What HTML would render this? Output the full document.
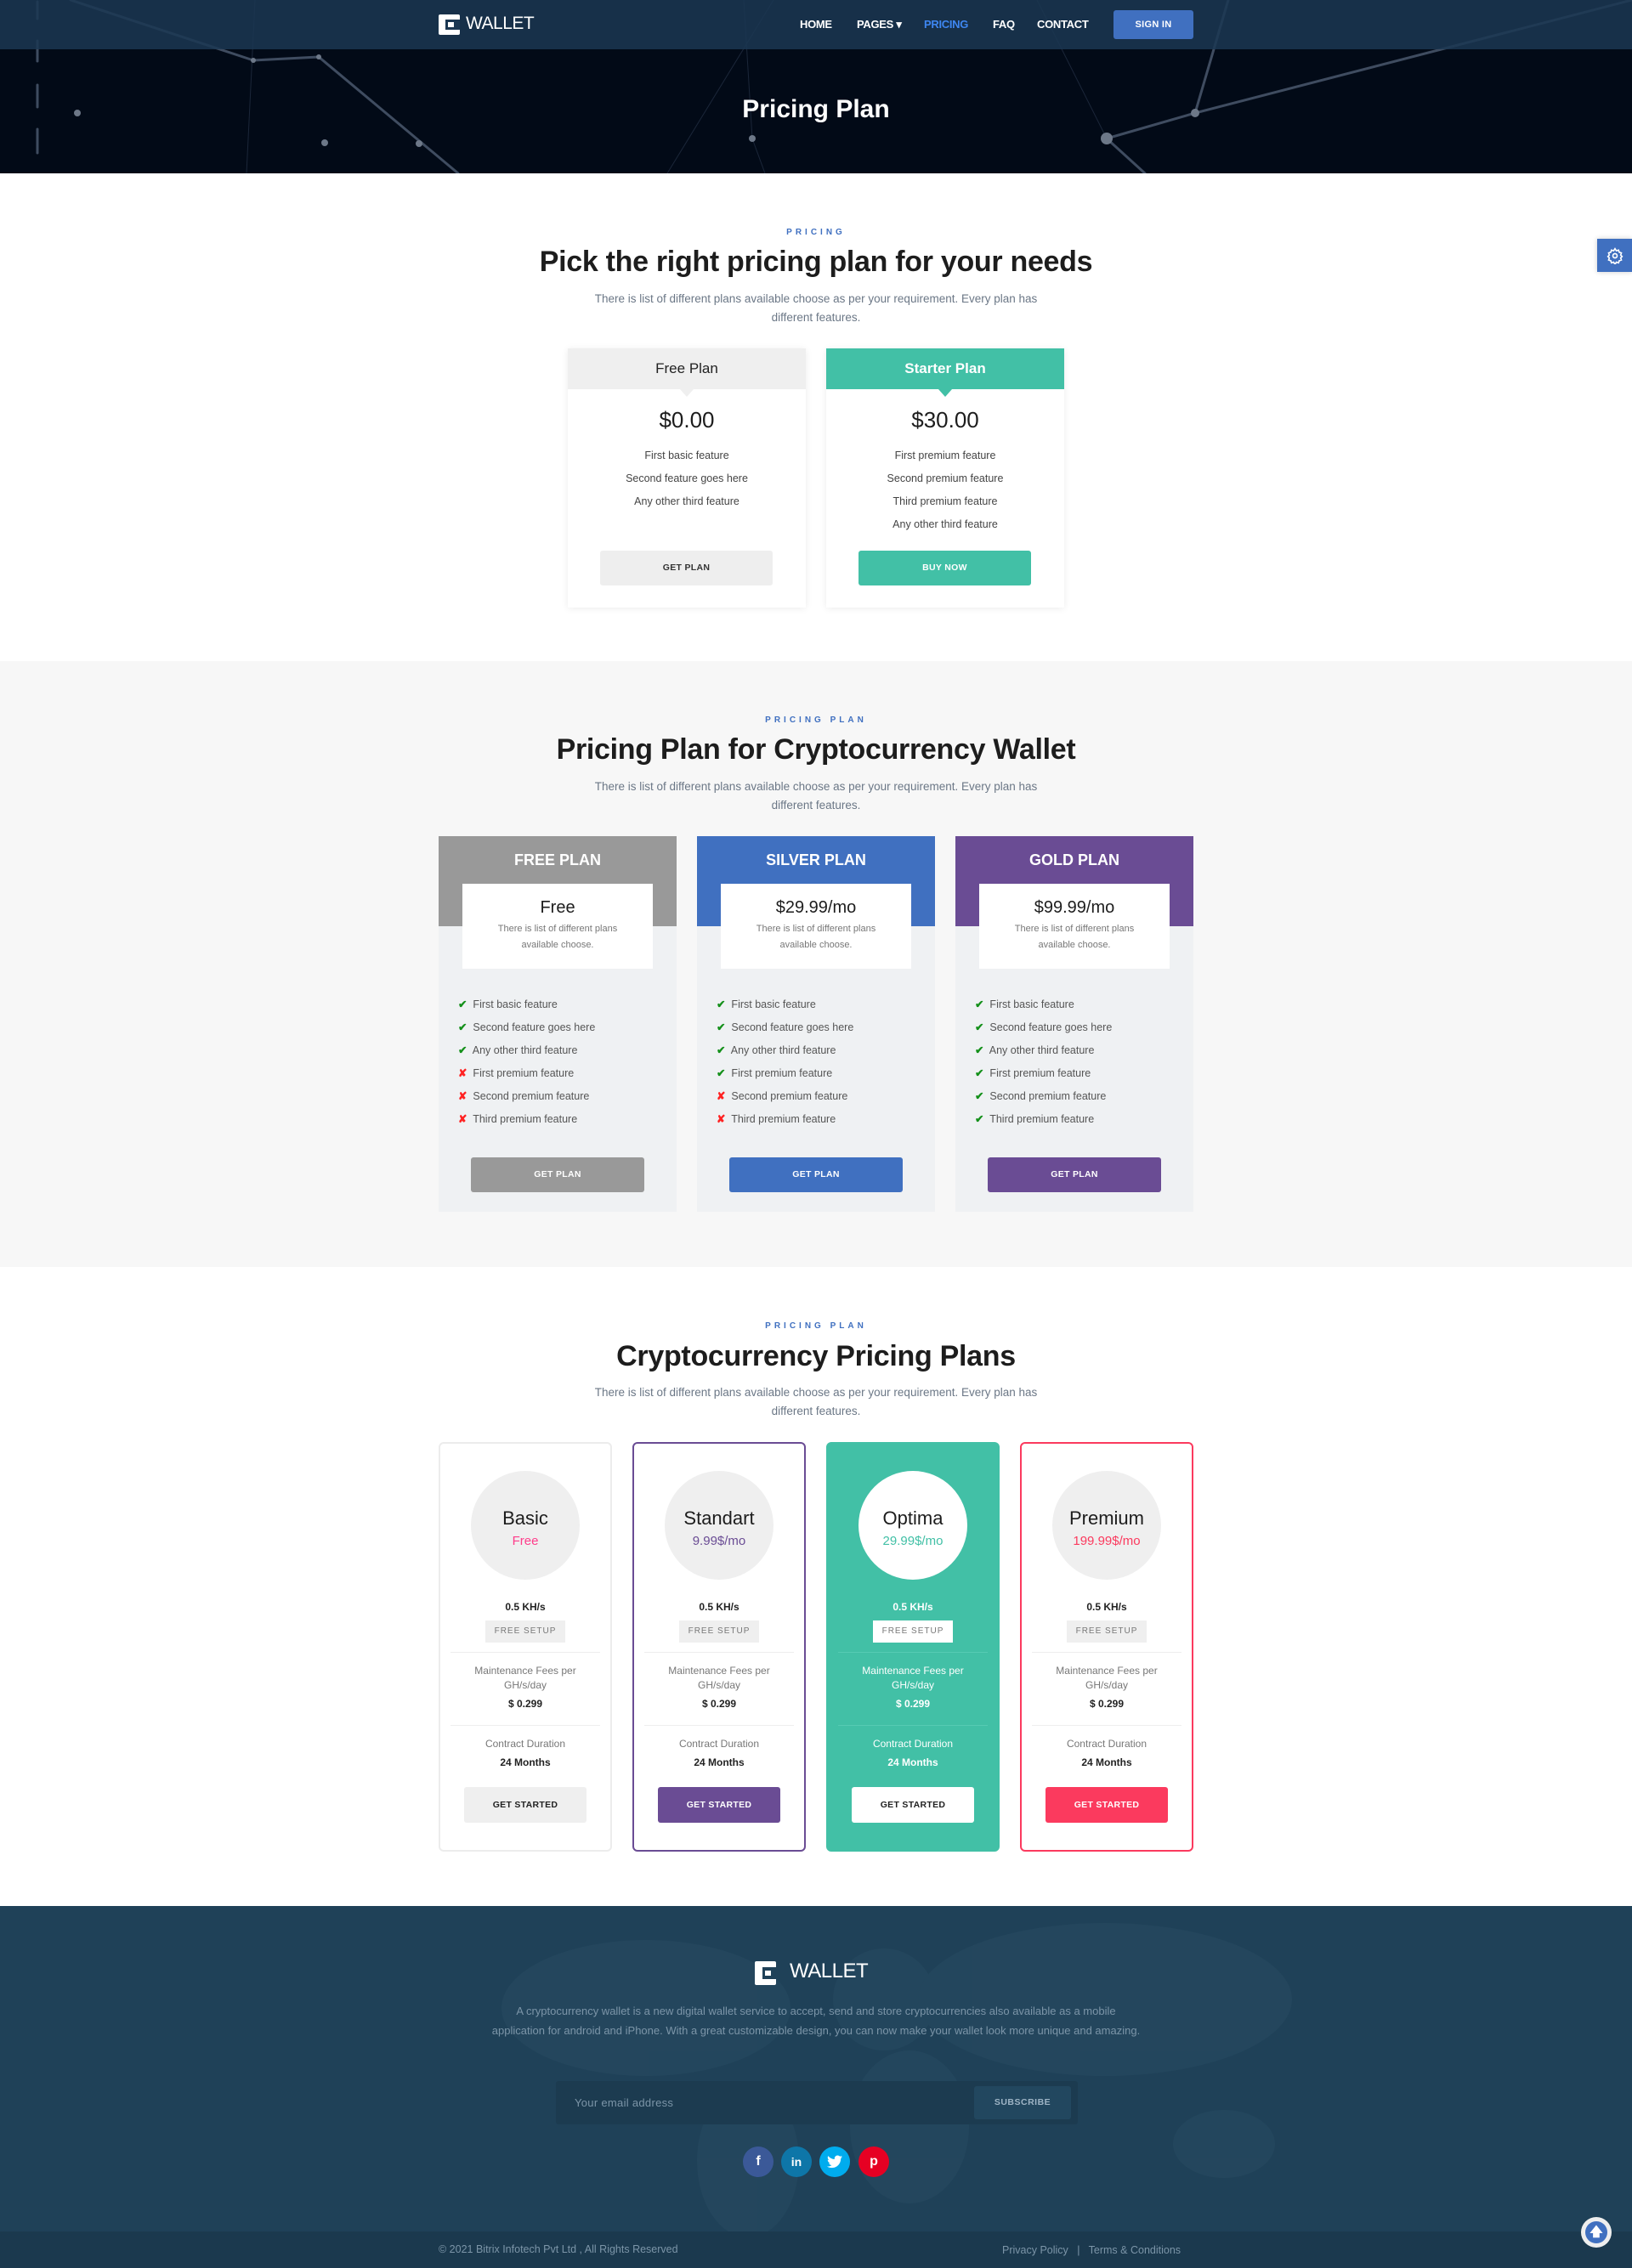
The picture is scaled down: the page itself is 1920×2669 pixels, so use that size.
<!DOCTYPE html>
<html><head><meta charset="utf-8">
<style>
*{margin:0;padding:0;box-sizing:border-box}
body{width:1920px;height:2669px;position:relative;font-family:"Liberation Sans",sans-serif;background:#fff;overflow:hidden;color:#222}
.a{position:absolute}
.c{text-align:center}
.lbl{font-size:10px;letter-spacing:4px;color:#4070c0;font-weight:bold}
.h2{font-size:34px;font-weight:bold;color:#1d1d1d;letter-spacing:-0.3px}
.desc{font-size:13.5px;color:#6b7786;line-height:22px}
.btn{position:absolute;border-radius:3px;font-size:10.5px;font-weight:bold;text-align:center;letter-spacing:.3px}
</style></head><body>

<!-- HERO -->
<div class="a" style="left:0;top:0;width:1920px;height:204px;background:#020a17"></div>
<svg class="a" style="left:0;top:0" width="1920" height="204">
 <g stroke="#2c3a50" stroke-width="1" opacity=".6">
  <line x1="875" y1="0" x2="885" y2="163"/><line x1="885" y1="163" x2="900" y2="204"/>
  <line x1="910" y1="0" x2="785" y2="204"/><line x1="1220" y1="0" x2="1302" y2="163"/>
  <line x1="290" y1="204" x2="300" y2="0"/>
 </g>
 <g stroke="#3f4c60" stroke-width="3" stroke-linecap="round">
  <line x1="83" y1="0" x2="298" y2="71"/><line x1="298" y1="71" x2="375" y2="67"/>
  <line x1="375" y1="67" x2="539" y2="204"/>
  <line x1="44" y1="2" x2="44" y2="22"/><line x1="44" y1="48" x2="44" y2="72"/>
  <line x1="44" y1="100" x2="44" y2="126"/><line x1="44" y1="152" x2="44" y2="180"/>
  <line x1="1302" y1="163" x2="1406" y2="133"/><line x1="1406" y1="133" x2="1920" y2="0"/>
  <line x1="1406" y1="133" x2="1445" y2="0"/><line x1="1302" y1="163" x2="1347" y2="204"/>
 </g>
 <g fill="#6d7888">
  <circle cx="493" cy="169" r="4"/><circle cx="382" cy="168" r="4"/><circle cx="91" cy="133" r="4"/>
  <circle cx="885" cy="163" r="4"/><circle cx="1302" cy="163" r="7"/><circle cx="1406" cy="133" r="5"/>
  <circle cx="298" cy="71" r="3"/><circle cx="375" cy="67" r="3"/>
 </g>
</svg>
<div class="a" style="left:0;top:0;width:1920px;height:58px;background:rgba(27,55,82,.85)"></div>
<div class="a" style="left:516px;top:17px;width:25px;height:24px;background:#fff;border-radius:2px"></div>
<div class="a" style="left:524px;top:23px;width:17px;height:12px;background:#1b3752"></div>
<div class="a" style="left:527px;top:26px;width:7px;height:6px;background:#fff"></div>
<div class="a" style="left:548px;top:16px;font-size:21px;color:#fff;letter-spacing:-.5px">WALLET</div>
<div class="a" style="top:21px;left:941px;font-size:13px;color:#fff;font-weight:bold;letter-spacing:-.3px">HOME</div>
<div class="a" style="top:21px;left:1008px;font-size:13px;color:#fff;font-weight:bold;letter-spacing:-.3px">PAGES ▾</div>
<div class="a" style="top:21px;left:1087px;font-size:13px;color:#3e86f0;font-weight:bold;letter-spacing:-.3px">PRICING</div>
<div class="a" style="top:21px;left:1168px;font-size:13px;color:#fff;font-weight:bold;letter-spacing:-.3px">FAQ</div>
<div class="a" style="top:21px;left:1220px;font-size:13px;color:#fff;font-weight:bold;letter-spacing:-.3px">CONTACT</div>
<div class="btn" style="left:1310px;top:12px;width:94px;height:34px;line-height:34px;background:#4070c0;color:#fff;font-size:11px">SIGN IN</div>
<div class="a c" style="left:0;width:1920px;top:112px;font-size:30px;font-weight:bold;color:#fff">Pricing Plan</div>

<div class="a" style="left:1879px;top:281px;width:41px;height:39px;background:#4070c0;box-shadow:0 0 6px rgba(0,0,0,.2)"></div>
<svg class="a" style="left:1890px;top:291px" width="20" height="20" viewBox="0 0 24 24" fill="none" stroke="#fff" stroke-width="2"><circle cx="12" cy="12" r="3"/><path d="M12 2l2 3 3-1 1 3 3 1-1 3 2 2-2 2 1 3-3 1-1 3-3-1-2 3-2-3-3 1-1-3-3-1 1-3-2-2 2-2-1-3 3-1 1-3 3 1z"/></svg>

<!-- SECTION 1 -->
<div class="a c lbl" style="left:0;width:1920px;top:268px">PRICING</div>
<div class="a c h2" style="left:0;width:1920px;top:289px">Pick the right pricing plan for your needs</div>
<div class="a c desc" style="left:675px;width:570px;top:341px">There is list of different plans available choose as per your requirement. Every plan has different features.</div>

<div class="a" style="left:668px;top:410px;width:280px;height:305px;background:#fff;box-shadow:0 1px 8px rgba(0,0,0,.08)"></div>
<div class="a c" style="left:668px;top:410px;width:280px;height:48px;line-height:48px;background:#efefef;font-size:17px;color:#222">Free Plan</div>
<div class="a" style="left:800px;top:458px;border-left:8px solid transparent;border-right:8px solid transparent;border-top:9px solid #efefef"></div>
<div class="a c" style="left:668px;width:280px;top:479px;font-size:26px;color:#1d1d1d">$0.00</div>
<div class="a c" style="left:668px;width:280px;top:523px;font-size:12.5px;color:#444;line-height:27px">First basic feature<br>Second feature goes here<br>Any other third feature</div>
<div class="btn" style="left:706px;top:648px;width:203px;height:41px;line-height:41px;background:#eee;color:#333">GET PLAN</div>

<div class="a" style="left:972px;top:410px;width:280px;height:305px;background:#fff;box-shadow:0 1px 8px rgba(0,0,0,.08)"></div>
<div class="a c" style="left:972px;top:410px;width:280px;height:48px;line-height:48px;background:#42c0a6;font-size:17px;color:#fff;font-weight:bold">Starter Plan</div>
<div class="a" style="left:1104px;top:458px;border-left:8px solid transparent;border-right:8px solid transparent;border-top:9px solid #42c0a6"></div>
<div class="a c" style="left:972px;width:280px;top:479px;font-size:26px;color:#1d1d1d">$30.00</div>
<div class="a c" style="left:972px;width:280px;top:523px;font-size:12.5px;color:#444;line-height:27px">First premium feature<br>Second premium feature<br>Third premium feature<br>Any other third feature</div>
<div class="btn" style="left:1010px;top:648px;width:203px;height:41px;line-height:41px;background:#42c0a6;color:#fff">BUY NOW</div>

<!-- SECTION 2 -->
<div class="a" style="left:0;top:778px;width:1920px;height:713px;background:#f7f7f7"></div>
<div class="a c lbl" style="left:0;width:1920px;top:842px">PRICING PLAN</div>
<div class="a c h2" style="left:0;width:1920px;top:863px">Pricing Plan for Cryptocurrency Wallet</div>
<div class="a c desc" style="left:675px;width:570px;top:915px">There is list of different plans available choose as per your requirement. Every plan has different features.</div>

<div class="a" style="left:516px;top:984px;width:280px;height:442px;background:#eff1f3"></div>
<div class="a c" style="left:516px;top:984px;width:280px;height:106px;background:#999;color:#fff;font-size:18px;font-weight:bold;padding-top:18px">FREE PLAN</div>
<div class="a c" style="left:544px;top:1040px;width:224px;height:100px;background:#fff"><div style="font-size:20px;margin-top:17px;color:#1d1d1d">Free</div><div style="font-size:11px;color:#777;line-height:19px;margin-top:4px">There is list of different plans<br>available choose.</div></div>
<div class="a" style="left:539px;top:1169px;font-size:12.5px;color:#555;line-height:27px"><span style="color:#14901a;font-weight:bold">✔</span>&nbsp; First basic feature<br><span style="color:#14901a;font-weight:bold">✔</span>&nbsp; Second feature goes here<br><span style="color:#14901a;font-weight:bold">✔</span>&nbsp; Any other third feature<br><span style="color:#f22;font-weight:bold">✘</span>&nbsp; First premium feature<br><span style="color:#f22;font-weight:bold">✘</span>&nbsp; Second premium feature<br><span style="color:#f22;font-weight:bold">✘</span>&nbsp; Third premium feature</div>
<div class="btn" style="left:554px;top:1362px;width:204px;height:41px;line-height:41px;background:#999;color:#fff">GET PLAN</div>

<div class="a" style="left:820px;top:984px;width:280px;height:442px;background:#eff1f3"></div>
<div class="a c" style="left:820px;top:984px;width:280px;height:106px;background:#4070c0;color:#fff;font-size:18px;font-weight:bold;padding-top:18px">SILVER PLAN</div>
<div class="a c" style="left:848px;top:1040px;width:224px;height:100px;background:#fff"><div style="font-size:20px;margin-top:17px;color:#1d1d1d">$29.99/mo</div><div style="font-size:11px;color:#777;line-height:19px;margin-top:4px">There is list of different plans<br>available choose.</div></div>
<div class="a" style="left:843px;top:1169px;font-size:12.5px;color:#555;line-height:27px"><span style="color:#14901a;font-weight:bold">✔</span>&nbsp; First basic feature<br><span style="color:#14901a;font-weight:bold">✔</span>&nbsp; Second feature goes here<br><span style="color:#14901a;font-weight:bold">✔</span>&nbsp; Any other third feature<br><span style="color:#14901a;font-weight:bold">✔</span>&nbsp; First premium feature<br><span style="color:#f22;font-weight:bold">✘</span>&nbsp; Second premium feature<br><span style="color:#f22;font-weight:bold">✘</span>&nbsp; Third premium feature</div>
<div class="btn" style="left:858px;top:1362px;width:204px;height:41px;line-height:41px;background:#4070c0;color:#fff">GET PLAN</div>

<div class="a" style="left:1124px;top:984px;width:280px;height:442px;background:#eff1f3"></div>
<div class="a c" style="left:1124px;top:984px;width:280px;height:106px;background:#6a4c94;color:#fff;font-size:18px;font-weight:bold;padding-top:18px">GOLD PLAN</div>
<div class="a c" style="left:1152px;top:1040px;width:224px;height:100px;background:#fff"><div style="font-size:20px;margin-top:17px;color:#1d1d1d">$99.99/mo</div><div style="font-size:11px;color:#777;line-height:19px;margin-top:4px">There is list of different plans<br>available choose.</div></div>
<div class="a" style="left:1147px;top:1169px;font-size:12.5px;color:#555;line-height:27px"><span style="color:#14901a;font-weight:bold">✔</span>&nbsp; First basic feature<br><span style="color:#14901a;font-weight:bold">✔</span>&nbsp; Second feature goes here<br><span style="color:#14901a;font-weight:bold">✔</span>&nbsp; Any other third feature<br><span style="color:#14901a;font-weight:bold">✔</span>&nbsp; First premium feature<br><span style="color:#14901a;font-weight:bold">✔</span>&nbsp; Second premium feature<br><span style="color:#14901a;font-weight:bold">✔</span>&nbsp; Third premium feature</div>
<div class="btn" style="left:1162px;top:1362px;width:204px;height:41px;line-height:41px;background:#6a4c94;color:#fff">GET PLAN</div>

<!-- SECTION 3 -->
<div class="a c lbl" style="left:0;width:1920px;top:1555px">PRICING PLAN</div>
<div class="a c h2" style="left:0;width:1920px;top:1577px">Cryptocurrency Pricing Plans</div>
<div class="a c desc" style="left:675px;width:570px;top:1628px">There is list of different plans available choose as per your requirement. Every plan has different features.</div>

<div class="a" style="left:516px;top:1697px;width:204px;height:482px;border:2px solid #ececec;border-radius:6px;background:#fff"></div>
<div class="a" style="left:554px;top:1731px;width:128px;height:128px;border-radius:50%;background:#efefef"></div>
<div class="a c" style="left:516px;width:204px;top:1774px;font-size:22px;color:#1d1d1d">Basic</div>
<div class="a c" style="left:516px;width:204px;top:1805px;font-size:15px;color:#ff3d8b">Free</div>
<div class="a" style="left:744px;top:1697px;width:204px;height:482px;border:2px solid #6a4c94;border-radius:6px;background:#fff"></div>
<div class="a" style="left:782px;top:1731px;width:128px;height:128px;border-radius:50%;background:#efefef"></div>
<div class="a c" style="left:744px;width:204px;top:1774px;font-size:22px;color:#1d1d1d">Standart</div>
<div class="a c" style="left:744px;width:204px;top:1805px;font-size:15px;color:#6a4c94">9.99$/mo</div>
<div class="a" style="left:972px;top:1697px;width:204px;height:482px;border-radius:6px;background:#42c0a6"></div>
<div class="a" style="left:1010px;top:1731px;width:128px;height:128px;border-radius:50%;background:#fff"></div>
<div class="a c" style="left:972px;width:204px;top:1774px;font-size:22px;color:#1d1d1d">Optima</div>
<div class="a c" style="left:972px;width:204px;top:1805px;font-size:15px;color:#42c0a6">29.99$/mo</div>
<div class="a" style="left:1200px;top:1697px;width:204px;height:482px;border:2px solid #fb3a5e;border-radius:6px;background:#fff"></div>
<div class="a" style="left:1238px;top:1731px;width:128px;height:128px;border-radius:50%;background:#efefef"></div>
<div class="a c" style="left:1200px;width:204px;top:1774px;font-size:22px;color:#1d1d1d">Premium</div>
<div class="a c" style="left:1200px;width:204px;top:1805px;font-size:15px;color:#fb3a5e">199.99$/mo</div>

<div class="a c" style="left:516px;width:204px;top:1884px;font-size:12px;font-weight:bold;color:#222">0.5 KH/s</div>
<div class="a c" style="left:744px;width:204px;top:1884px;font-size:12px;font-weight:bold;color:#222">0.5 KH/s</div>
<div class="a c" style="left:972px;width:204px;top:1884px;font-size:12px;font-weight:bold;color:#fff">0.5 KH/s</div>
<div class="a c" style="left:1200px;width:204px;top:1884px;font-size:12px;font-weight:bold;color:#222">0.5 KH/s</div>

<div class="a c" style="left:571px;width:94px;top:1907px;height:26px;line-height:26px;background:#efefef;font-size:10px;letter-spacing:1px;color:#777">FREE SETUP</div>
<div class="a c" style="left:799px;width:94px;top:1907px;height:26px;line-height:26px;background:#efefef;font-size:10px;letter-spacing:1px;color:#777">FREE SETUP</div>
<div class="a c" style="left:1027px;width:94px;top:1907px;height:26px;line-height:26px;background:#fff;font-size:10px;letter-spacing:1px;color:#777">FREE SETUP</div>
<div class="a c" style="left:1255px;width:94px;top:1907px;height:26px;line-height:26px;background:#efefef;font-size:10px;letter-spacing:1px;color:#777">FREE SETUP</div>

<div class="a" style="left:530px;width:176px;top:1944px;border-top:1px solid #eee"></div>
<div class="a" style="left:530px;width:176px;top:2030px;border-top:1px solid #eee"></div>
<div class="a" style="left:758px;width:176px;top:1944px;border-top:1px solid #eee"></div>
<div class="a" style="left:758px;width:176px;top:2030px;border-top:1px solid #eee"></div>
<div class="a" style="left:986px;width:176px;top:1944px;border-top:1px solid #56cbb3"></div>
<div class="a" style="left:986px;width:176px;top:2030px;border-top:1px solid #56cbb3"></div>
<div class="a" style="left:1214px;width:176px;top:1944px;border-top:1px solid #eee"></div>
<div class="a" style="left:1214px;width:176px;top:2030px;border-top:1px solid #eee"></div>

<div class="a c" style="left:516px;width:204px;top:1958px;font-size:12px;color:#777;line-height:17px">Maintenance Fees per<br>GH/s/day<br><b style="color:#222;line-height:26px">$ 0.299</b></div>
<div class="a c" style="left:744px;width:204px;top:1958px;font-size:12px;color:#777;line-height:17px">Maintenance Fees per<br>GH/s/day<br><b style="color:#222;line-height:26px">$ 0.299</b></div>
<div class="a c" style="left:972px;width:204px;top:1958px;font-size:12px;color:#fff;line-height:17px">Maintenance Fees per<br>GH/s/day<br><b style="color:#fff;line-height:26px">$ 0.299</b></div>
<div class="a c" style="left:1200px;width:204px;top:1958px;font-size:12px;color:#777;line-height:17px">Maintenance Fees per<br>GH/s/day<br><b style="color:#222;line-height:26px">$ 0.299</b></div>

<div class="a c" style="left:516px;width:204px;top:2041px;font-size:12px;color:#777;line-height:22px">Contract Duration<br><b style="color:#222">24 Months</b></div>
<div class="a c" style="left:744px;width:204px;top:2041px;font-size:12px;color:#777;line-height:22px">Contract Duration<br><b style="color:#222">24 Months</b></div>
<div class="a c" style="left:972px;width:204px;top:2041px;font-size:12px;color:#fff;line-height:22px">Contract Duration<br><b style="color:#fff">24 Months</b></div>
<div class="a c" style="left:1200px;width:204px;top:2041px;font-size:12px;color:#777;line-height:22px">Contract Duration<br><b style="color:#222">24 Months</b></div>

<div class="btn" style="left:546px;top:2103px;width:144px;height:42px;line-height:42px;background:#efefef;color:#222">GET STARTED</div>
<div class="btn" style="left:774px;top:2103px;width:144px;height:42px;line-height:42px;background:#6a4c94;color:#fff">GET STARTED</div>
<div class="btn" style="left:1002px;top:2103px;width:144px;height:42px;line-height:42px;background:#fff;color:#222">GET STARTED</div>
<div class="btn" style="left:1230px;top:2103px;width:144px;height:42px;line-height:42px;background:#fb3a5e;color:#fff">GET STARTED</div>

<!-- FOOTER -->
<div class="a" style="left:0;top:2243px;width:1920px;height:426px;background:#1f4158"></div>
<svg class="a" style="left:0;top:2243px" width="1920" height="383">
 <g fill="#2a4d64" opacity=".45">
  <ellipse cx="760" cy="120" rx="170" ry="80"/><ellipse cx="880" cy="300" rx="60" ry="90"/>
  <ellipse cx="1040" cy="110" rx="60" ry="60"/><ellipse cx="1070" cy="260" rx="70" ry="90"/>
  <ellipse cx="1300" cy="110" rx="220" ry="90"/><ellipse cx="1440" cy="280" rx="60" ry="40"/>
 </g>
</svg>
<div class="a" style="left:888px;top:2308px;width:25px;height:28px;background:#fff;border-radius:2px"></div>
<div class="a" style="left:897px;top:2315px;width:16px;height:14px;background:#1f4158"></div>
<div class="a" style="left:900px;top:2319px;width:7px;height:6px;background:#fff"></div>
<div class="a" style="left:929px;top:2306px;font-size:24px;color:#fff;letter-spacing:-.5px">WALLET</div>
<div class="a c" style="left:578px;width:764px;top:2355px;font-size:13px;color:#7c95a8;line-height:23px">A cryptocurrency wallet is a new digital wallet service to accept, send and store cryptocurrencies also available as a mobile application for android and iPhone. With a great customizable design, you can now make your wallet look more unique and amazing.</div>
<div class="a" style="left:654px;top:2449px;width:614px;height:51px;background:#1c3b50;border-radius:3px"></div>
<div class="a" style="left:676px;top:2467px;font-size:13px;color:#7c95a8;letter-spacing:.3px">Your email address</div>
<div class="a c" style="left:1146px;top:2455px;width:114px;height:39px;line-height:39px;background:#22475f;border-radius:3px;font-size:10.5px;font-weight:bold;color:#9fb5c6;letter-spacing:.5px">SUBSCRIBE</div>

<div class="a c" style="left:874px;top:2526px;width:36px;height:36px;border-radius:50%;background:#3b5998;color:#fff;font-weight:bold;font-size:16px;line-height:36px">f</div>
<div class="a c" style="left:919px;top:2526px;width:36px;height:36px;border-radius:50%;background:#0e76a8;color:#fff;font-weight:bold;font-size:14px;line-height:36px">in</div>
<div class="a" style="left:964px;top:2526px;width:36px;height:36px;border-radius:50%;background:#00acee"></div>
<svg class="a" style="left:973px;top:2536px" width="18" height="16" viewBox="0 0 24 20"><path fill="#fff" d="M24 2.4c-.9.4-1.8.7-2.8.8 1-.6 1.8-1.6 2.2-2.7-1 .6-2 1-3.1 1.2C19.3.7 18 0 16.6 0c-2.7 0-4.9 2.2-4.9 4.9 0 .4 0 .8.1 1.1C7.7 5.8 4.1 3.9 1.7.9c-.4.7-.7 1.6-.7 2.5 0 1.7.9 3.2 2.2 4.1-.8 0-1.6-.2-2.2-.6v.1c0 2.4 1.7 4.4 3.9 4.8-.4.1-.8.2-1.3.2-.3 0-.6 0-.9-.1.6 2 2.4 3.4 4.6 3.4-1.7 1.3-3.8 2.1-6.1 2.1-.4 0-.8 0-1.2-.1 2.2 1.4 4.8 2.2 7.5 2.2 9.1 0 14-7.5 14-14v-.6c1-.7 1.8-1.6 2.5-2.5z"/></svg>
<div class="a c" style="left:1010px;top:2526px;width:36px;height:36px;border-radius:50%;background:#e60023;color:#fff;font-weight:bold;font-size:16px;line-height:36px">p</div>

<div class="a" style="left:0;top:2626px;width:1920px;height:43px;background:#1b394e"></div>
<div class="a" style="left:516px;top:2640px;font-size:12.5px;color:#7c95a8">© 2021 Bitrix Infotech Pvt Ltd , All Rights Reserved</div>
<div class="a" style="left:1179px;top:2641px;font-size:12.5px;color:#7c95a8">Privacy Policy &nbsp; | &nbsp; Terms &amp; Conditions</div>
<div class="a" style="left:1860px;top:2609px;width:36px;height:36px;border-radius:50%;background:#eee"></div>
<div class="a c" style="left:1865px;top:2614px;width:26px;height:26px;border-radius:50%;background:#4070c0;color:#fff;font-weight:bold;font-size:15px;line-height:26px">🡅</div>
</body></html>
